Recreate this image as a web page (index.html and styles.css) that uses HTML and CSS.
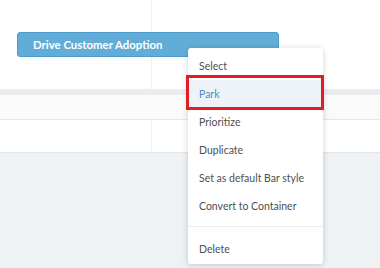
FILE: index.html
```html
<!DOCTYPE html>
<html lang="en">
<head>
  <meta charset="UTF-8">
  <title>Roadmap</title>
  <link rel="stylesheet" href="styles.css">
</head>
<body>
  <div class="board">
    <div class="lane lane-top">
      <div class="bar">Drive Customer Adoption</div>
    </div>
    <div class="lane-head"></div>
    <div class="lane lane-row"></div>
    <div class="lane lane-empty"></div>
    <div class="backdrop"></div>
  </div>

  <ul class="context-menu">
    <li>Select</li>
    <li class="active">Park</li>
    <li>Prioritize</li>
    <li>Duplicate</li>
    <li>Set as default Bar style</li>
    <li>Convert to Container</li>
    <li class="divider"></li>
    <li>Delete</li>
  </ul>
</body>
</html>
```

FILE: styles.css
```css
body, html {
  margin: 0;
  padding: 0;
  font-family: Lato, 'Open Sans', sans-serif;
  background-color: #eef2f5;
  overflow: hidden;
}

.board {
  width: 380px;
}

.lane {
  background-color: #fff;
  background-image: linear-gradient(#f0f0f0, #f0f0f0);
  background-size: 1px 100%;
  background-position: 151px 0;
  background-repeat: no-repeat;
}

.lane-top {
  height: 89px;
  padding: 32px 0 0 17px;
  box-sizing: border-box;
}

.bar {
  width: 262px;
  height: 25px;
  box-sizing: border-box;
  background: #62acd8;
  border: 1px solid #4f9dd0;
  border-radius: 3px;
  color: #fff;
  font-weight: bold;
  font-size: 11.4px;
  line-height: 23px;
  padding-left: 15px;
}

.lane-head {
  height: 6px;
  background: #e9edf0;
}

.lane-row {
  height: 24px;
  background-color: #fafafa;
  border-bottom: 1px solid #e6e8ea;
  background-image: none;
}

.lane-empty {
  height: 32px;
  border-bottom: 1px solid #e3e6e9;
}

.context-menu {
  position: absolute;
  left: 188px;
  top: 48px;
  width: 135px;
  height: 216px;
  box-sizing: border-box;
  margin: 0;
  padding: 4px 0 0;
  list-style: none;
  background: #fff;
  border-radius: 3px;
  box-shadow: 0 1px 6px rgba(0, 0, 0, 0.18);
}

.context-menu li {
  position: relative;
  height: 28px;
  line-height: 28px;
  padding-left: 11px;
  font-size: 10.5px;
  color: #4f4f4f;
  white-space: nowrap;
}

.context-menu li.active {
  color: #4a8fc7;
  background: #eef3fa;
}

.context-menu li.active::after {
  content: "";
  position: absolute;
  top: -5px;
  bottom: -2px;
  left: -2px;
  right: -1px;
  border: 3px solid #e31b23;
}

.context-menu li.divider {
  height: 0;
  margin: 6px 0 8px;
  border-top: 1px solid #ececec;
}
```
